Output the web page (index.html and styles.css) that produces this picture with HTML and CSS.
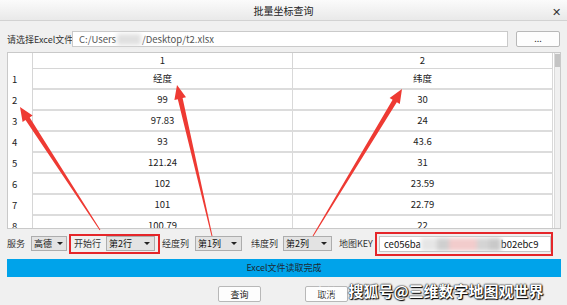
FILE: index.html
```html
<!DOCTYPE html>
<html lang="zh-CN">
<head>
    <meta charset="UTF-8">
    <title>批量坐标查询</title>
    <link rel="stylesheet" href="styles.css">
</head>
<body>
    <div class="window">
        <div class="titlebar">
            <span class="title">批量坐标查询</span>
            <span class="close">✕</span>
        </div>

        <div class="content">
            <!-- file picker -->
            <div class="file-row">
                <span class="label file-label">请选择Excel文件</span>
                <div class="path">C:/Users<span class="blur-user"></span>/Desktop/t2.xlsx</div>
                <button class="browse">...</button>
            </div>

            <!-- data table -->
            <div class="table">
                <div class="grid">
                    <div class="corner"></div>
                    <div class="head">1</div>
                    <div class="head">2</div>

                    <div class="rowhead">1</div><div class="cell">经度</div><div class="cell">纬度</div>
                    <div class="rowhead">2</div><div class="cell">99</div><div class="cell">30</div>
                    <div class="rowhead">3</div><div class="cell">97.83</div><div class="cell">24</div>
                    <div class="rowhead">4</div><div class="cell">93</div><div class="cell">43.6</div>
                    <div class="rowhead">5</div><div class="cell">121.24</div><div class="cell">31</div>
                    <div class="rowhead">6</div><div class="cell">102</div><div class="cell">23.59</div>
                    <div class="rowhead">7</div><div class="cell">101</div><div class="cell">22.79</div>
                    <div class="rowhead">8</div><div class="cell">100.79</div><div class="cell">22</div>
                </div>
                <div class="scrollbar"><div class="thumb"></div></div>
            </div>

            <!-- options -->
            <div class="controls">
                <span class="label l-service">服务</span>
                <div class="combo c-service">高德<span class="caret"></span></div>
                <div class="mark mark-row">
                    <span class="label l-row">开始行</span>
                    <div class="combo c-row">第2行<span class="caret"></span></div>
                </div>
                <span class="label l-lng">经度列</span>
                <div class="combo c-lng">第1列<span class="caret"></span></div>
                <span class="label l-lat">纬度列</span>
                <div class="combo c-lat">第2列<span class="caret"></span></div>
                <span class="label l-key">地图KEY</span>
                <div class="mark mark-key">
                    <div class="key">ce056ba<span class="blur-key"></span>b02ebc9</div>
                </div>
            </div>

            <div class="status">Excel文件读取完成</div>

            <div class="actions">
                <button class="btn">查询</button>
                <button class="btn">取消</button>
            </div>
        </div>

        <!-- annotation arrows -->
        <svg class="arrows" width="567" height="305" viewBox="0 0 567 305">
            <polygon points="100.4,229.7 29.7,117.4 32.6,115.4 20,107 22.6,122 25.5,120.1 99.6,230.3" />
            <polygon points="212.5,235.9 182.6,98 186,97.2 177,85 174.4,100 177.8,99.2 211.5,236.1" />
            <polygon points="313.4,236.3 396.8,102.3 399.8,104.1 402,89 389.6,97.9 392.6,99.7 312.6,235.7" />
        </svg>

        <div class="watermark"><span class="faint">http</span>搜狐号@三维数字地图观世界</div>
    </div>
</body>
</html>
```

FILE: styles.css
```css
* {
    box-sizing: border-box;
}

body, html {
    margin: 0;
    padding: 0;
    background-color: #f0f0f0;
    font-family: "Noto Sans CJK SC", "Noto Sans", sans-serif;
    font-size: 9.5px;
    color: #222;
}

.window {
    position: relative;
    width: 567px;
    height: 305px;
    overflow: hidden;
    background-color: #f0f0f0;
}

.titlebar {
    height: 21px;
    border-bottom: 1px solid #d2d2d2;
    background: linear-gradient(#fbfbfb, #e9e9e9);
    display: flex;
    align-items: center;
    justify-content: center;
    position: relative;
}

.title {
    font-size: 10px;
    color: #222;
}

.close {
    position: absolute;
    right: 6px;
    top: 3px;
    font-size: 11px;
    color: #333;
}

.content {
    padding: 9px 6px 0 7px;
}

.label {
    white-space: nowrap;
    color: #333;
    flex-shrink: 0;
    font-size: 9px;
}

/* file row */
.file-row {
    display: flex;
    align-items: center;
    height: 18px;
}

.file-label {
    width: 65px;
}

.path {
    width: 436px;
    height: 16px;
    background: white;
    border: 1px solid #cacaca;
    padding-left: 6px;
    color: #555;
    display: flex;
    align-items: center;
}

.blur-user {
    display: inline-block;
    width: 24px;
    height: 11px;
    margin: 0 1px;
    background: #e0e0e0;
    filter: blur(2px);
}

.browse {
    margin-left: 8px;
    width: 44px;
    height: 16px;
    padding: 0;
    border: 1px solid #b8b8b8;
    border-radius: 2px;
    background: #fdfdfd;
    font-family: inherit;
    font-size: 9px;
    line-height: 8px;
    color: #333;
}

/* table */
.table {
    margin-top: 4px;
    display: flex;
    height: 177px;
    width: 554px;
    border: 1px solid #c9c9c9;
    background: white;
    overflow: hidden;
}

.grid {
    display: grid;
    grid-template-columns: 25px 260px 260px;
    grid-template-rows: 16px;
    grid-auto-rows: 21px;
}

.corner {
    border-right: 1px solid #d6d6d6;
}

.head {
    border-right: 1px solid #d6d6d6;
    border-bottom: 1px solid #d6d6d6;
    text-align: center;
    line-height: 15px;
}

.rowhead {
    border-right: 1px solid #d6d6d6;
    padding-left: 4px;
    line-height: 21px;
}

.cell {
    border-right: 1px solid #d9d9d9;
    border-bottom: 2px solid #dcdcdc;
    text-align: center;
    line-height: 19px;
}

.scrollbar {
    width: 7px;
    margin-left: 1px;
    background: #f0f0f0;
    border-left: 1px solid #dadada;
}

.thumb {
    margin: 1px 0 0 0;
    width: 6px;
    height: 13px;
    background: #c4c4c4;
}

/* options row */
.controls {
    margin-top: 4px;
    display: flex;
    align-items: center;
    height: 21px;
}

.combo {
    display: flex;
    align-items: center;
    justify-content: space-between;
    flex-shrink: 0;
    height: 15px;
    padding: 0 4px 0 2px;
    border: 1px solid #adadad;
    background: #e3e3e3;
    color: #111;
    white-space: nowrap;
    font-size: 9px;
}

.caret {
    width: 0;
    height: 0;
    border-left: 3px solid transparent;
    border-right: 3px solid transparent;
    border-top: 3px solid #222;
}

.l-service { width: 21px; }
.c-service { width: 36px; margin-left: 3px; padding-right: 3px; }

.mark {
    border: 2px solid #e5262a;
    display: flex;
    align-items: center;
    flex-shrink: 0;
}

.mark-row {
    margin-left: 2px;
    width: 91px;
    height: 20px;
    padding-left: 3px;
}

.l-row { width: 32px; }
.c-row { width: 49px; }

.l-lng { width: 33px; margin-left: 2px; }
.c-lng { width: 47px; }

.l-lat { width: 32px; margin-left: 9px; }
.c-lat { width: 49px; }

.l-key { width: 36px; margin-left: 7px; }

.mark-key {
    width: 178px;
    height: 24px;
    align-self: flex-start;
    margin-top: -1px;
    padding: 0 0 0 2px;
}

.key {
    flex: 1;
    height: 16px;
    background: white;
    border: 1px solid #c8c8c8;
    padding-left: 4px;
    display: flex;
    align-items: center;
    color: #111;
    white-space: nowrap;
    overflow: hidden;
}

.blur-key {
    display: inline-block;
    width: 80px;
    height: 13px;
    background: linear-gradient(90deg, #e6e6e6 0 20%, #cfcfcf 20% 35%, #f2cccc 35% 70%, #d4d4d4 70% 85%, #c9c9c9 85%);
    filter: blur(2px);
}

.status {
    margin-top: 5px;
    width: 554px;
    height: 18px;
    line-height: 18px;
    background: #00a3ea;
    color: #1d2a33;
    text-align: center;
    font-size: 9px;
}

.actions {
    margin-top: 9px;
    display: flex;
    padding-left: 211px;
}

.btn {
    width: 43px;
    height: 16px;
    padding: 0;
    margin-right: 44px;
    border: 1px solid #b8b8b8;
    border-radius: 2px;
    background: #fdfdfd;
    font-family: inherit;
    font-size: 9px;
    color: #222;
}

/* overlays */
.arrows {
    position: absolute;
    left: 0;
    top: 0;
    pointer-events: none;
}

.arrows polygon {
    fill: #ee3a33;
}

.watermark {
    position: absolute;
    left: 318px;
    top: 280px;
    font-size: 15px;
    font-weight: bold;
    color: white;
    white-space: nowrap;
    text-shadow: 0 0 2px #000, 0 0 1px #000, 1px 1px 1px #000;
}

.faint {
    font-weight: normal;
    color: rgba(255, 255, 255, 0.6);
    text-shadow: none;
    margin-right: 3px;
    font-size: 14px;
}
```
